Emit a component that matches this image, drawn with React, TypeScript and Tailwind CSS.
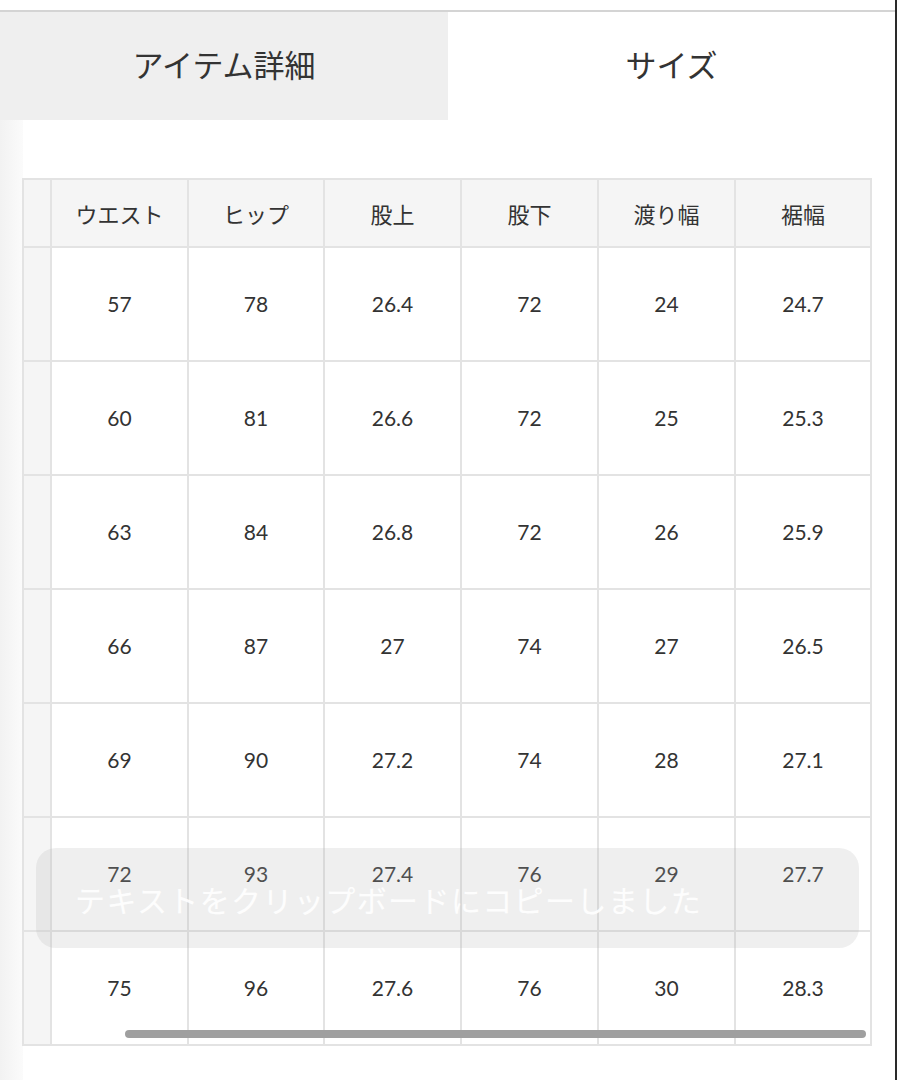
const headers = ['ウエスト', 'ヒップ', '股上', '股下', '渡り幅', '裾幅'];

const rows: string[][] = [
  ['57', '78', '26.4', '72', '24', '24.7'],
  ['60', '81', '26.6', '72', '25', '25.3'],
  ['63', '84', '26.8', '72', '26', '25.9'],
  ['66', '87', '27', '74', '27', '26.5'],
  ['69', '90', '27.2', '74', '28', '27.1'],
  ['72', '93', '27.4', '76', '29', '27.7'],
  ['75', '96', '27.6', '76', '30', '28.3'],
];

// column widths include the 2px left border of each cell
const widths = ['w-[137px]', 'w-[136px]', 'w-[137px]', 'w-[137px]', 'w-[137px]', 'w-[136px]'];

const jp = { fontFamily: '"Noto Sans CJK JP", "Noto Sans", sans-serif' };
const num = { fontFamily: 'Lato, "Noto Sans", sans-serif' };

export default function App() {
  return (
    <div className="relative w-[897px] h-[1080px] overflow-hidden bg-white border-r-2 border-[#2a2a2a]" style={jp}>
      <div className="h-[10px] bg-white" />
      <div className="flex h-[110px] border-t-2 border-[#d4d4d4]">
        <div className="w-[448px] bg-[#efefef] flex items-center justify-center pb-[4px] text-[31px] text-[#333]">
          アイテム詳細
        </div>
        <div className="flex-1 bg-white flex items-center justify-center pb-[4px] text-[31px] text-[#333]">
          サイズ
        </div>
      </div>

      <div className="flex h-[960px]">
        <div className="w-[23px] bg-gradient-to-r from-[#f2f2f2] to-[#fbfbfb]" />
        <div className="pt-[58px] -ml-[1px]">
          <div className="w-[850px] border-2 border-[#e3e3e3]">
            {/* header */}
            <div className="flex h-[66px] bg-[#f5f5f5]">
              <div className="w-[26px] shrink-0" />
              {headers.map((h, i) => (
                <div
                  key={h}
                  className={`${widths[i]} shrink-0 border-l-2 border-[#e3e3e3] flex items-center justify-center text-[22px] text-[#333]`}
                >
                  {h}
                </div>
              ))}
            </div>
            {rows.map((r, ri) => (
              <div key={ri} className="flex h-[114px] border-t-2 border-[#e3e3e3]">
                <div className="w-[26px] shrink-0 bg-[#f5f5f5]" />
                {r.map((v, i) => (
                  <div
                    key={i}
                    className={`${widths[i]} shrink-0 border-l-2 border-[#e3e3e3] bg-white flex items-center justify-center text-[21px] text-[#333]`}
                    style={num}
                  >
                    {v}
                  </div>
                ))}
              </div>
            ))}
          </div>
        </div>
      </div>

      {/* horizontal scrollbar of the table */}
      <div className="absolute left-[125px] top-[1030px] w-[741px] h-[8px] rounded-full bg-[#9f9f9f]" />

      {/* copied toast */}
      <div className="absolute left-[36px] top-[848px] w-[823px] h-[100px] rounded-[20px] bg-[rgba(180,180,180,0.22)] flex items-center pl-[39px] pt-[2px]">
        <span className="text-[30px] text-white/90 tracking-[1.4px]">テキストをクリップボードにコピーしました</span>
      </div>
    </div>
  );
}
